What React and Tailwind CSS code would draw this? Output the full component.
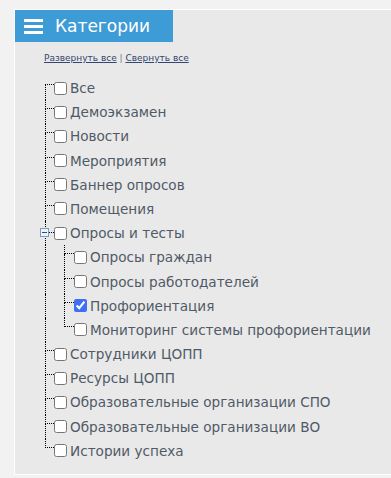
import { Fragment } from 'react';

const tree = [
  { title: 'Все' },
  { title: 'Демоэкзамен' },
  { title: 'Новости' },
  { title: 'Мероприятия' },
  { title: 'Баннер опросов' },
  { title: 'Помещения' },
  {
    title: 'Опросы и тесты',
    children: [
      { title: 'Опросы граждан' },
      { title: 'Опросы работодателей' },
      { title: 'Профориентация', checked: true },
      { title: 'Мониторинг системы профориентации' },
    ],
  },
  { title: 'Сотрудники ЦОПП' },
  { title: 'Ресурсы ЦОПП' },
  { title: 'Образовательные организации СПО' },
  { title: 'Образовательные организации ВО' },
  { title: 'Истории успеха' },
];

// dotted tree guide: top half carries the horizontal stub
function Connector({ first, last, width }) {
  return (
    <div className={'self-stretch flex flex-col shrink-0 ' + width}>
      <div className={'h-[9px] border-b border-dotted border-black ' + (first ? '' : 'border-l')} />
      <div className={'flex-1 ' + (last ? '' : 'border-l border-dotted border-black')} />
    </div>
  );
}

function Check({ checked }) {
  return (
    <input
      type="checkbox"
      defaultChecked={checked}
      className="m-0 w-[13px] h-[13px] shrink-0 accent-[#3f6ff2]"
    />
  );
}

function Label({ children }) {
  return <span className="ml-[3px] text-[13.6px] leading-[16px] text-[#505a66] whitespace-nowrap">{children}</span>;
}

export default function App() {
  return (
    <div className="h-[478px] w-full overflow-hidden bg-[#f2f2f2] pl-[14px] pt-[9px] font-['DejaVu_Sans',sans-serif]">
      <div className="w-[400px] h-[466px] bg-[#e9e9e9] border border-white">
        {/* Header */}
        <div className="w-[158px] h-[32px] bg-[#3d9bd6] flex items-center pl-[9px]">
          <div className="flex flex-col gap-[3px] w-[19px]">
            <div className="h-[3px] bg-white" />
            <div className="h-[3px] bg-white" />
            <div className="h-[3px] bg-white" />
          </div>
          <span className="ml-[12px] text-white text-[17px] leading-none">Категории</span>
        </div>

        <div className="mt-[10px] pl-[29px] h-[12px] text-[9px] leading-[12px] text-[#34466e]">
          <a className="underline">Развернуть все</a>
          <span className="text-[#777]"> | </span>
          <a className="underline">Свернуть все</a>
        </div>

        {/* Tree */}
        <div className="mt-[12px] pl-[30px]">
          {tree.map((node, i) => {
            const first = i === 0;
            const last = i === tree.length - 1;
            return (
              <Fragment key={i}>
                <div className="h-[24.2px] flex items-start">
                  {node.children ? (
                    <div className="relative self-stretch w-[9px] shrink-0 border-l border-dotted border-black">
                      <div className="h-[12px] border-b border-dotted border-black ml-[2px]" />
                      <div className="absolute left-[-6px] top-[7px] w-[9px] h-[9px] border border-[#7d9cc4] bg-[#eef3fa] flex items-center justify-center">
                        <div className="w-[5px] h-px bg-[#2a4f86]" />
                      </div>
                    </div>
                  ) : (
                    <Connector first={first} last={last} width="w-[9px]" />
                  )}
                  <div className="flex items-center mt-[4px]">
                    <Check checked={node.checked} />
                    <Label>{node.title}</Label>
                  </div>
                </div>
                {node.children &&
                  node.children.map((child, j) => (
                    <div key={j} className="h-[24.2px] flex items-start">
                      <div className="self-stretch w-[19px] shrink-0 border-l border-dotted border-black" />
                      <Connector first={false} last={j === node.children.length - 1} width="w-[10px]" />
                      <div className="flex items-center mt-[4px]">
                        <Check checked={child.checked} />
                        <Label>{child.title}</Label>
                      </div>
                    </div>
                  ))}
              </Fragment>
            );
          })}
        </div>
      </div>
    </div>
  );
}
